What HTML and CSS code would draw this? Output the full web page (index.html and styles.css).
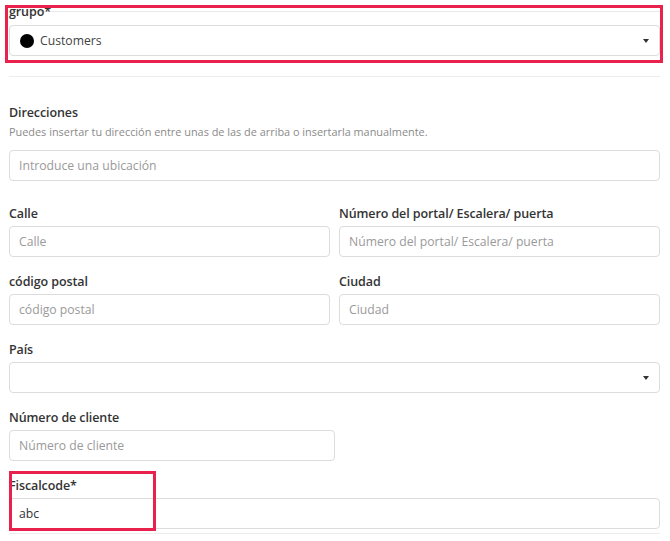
FILE: index.html
```html
<!DOCTYPE html>
<html lang="es">
<head>
<meta charset="utf-8">
<title>Cliente</title>
<link rel="stylesheet" href="styles.css">
</head>
<body>
<form class="form">
  <div class="group group-top">
    <label class="label">grupo*</label>
    <div class="select">
      <span class="dot"></span>
      <span class="select-value">Customers</span>
      <span class="caret"></span>
    </div>
    <span class="mark mark-top"></span>
  </div>

  <hr class="divider">

  <div class="group group-address">
    <label class="label">Direcciones</label>
    <p class="help">Puedes insertar tu dirección entre unas de las de arriba o insertarla manualmente.</p>
    <input class="input" type="text" placeholder="Introduce una ubicación">
  </div>

  <div class="row">
    <div class="group">
      <label class="label">Calle</label>
      <input class="input" type="text" placeholder="Calle">
    </div>
    <div class="group">
      <label class="label">Número del portal/ Escalera/ puerta</label>
      <input class="input" type="text" placeholder="Número del portal/ Escalera/ puerta">
    </div>
  </div>

  <div class="row">
    <div class="group">
      <label class="label">código postal</label>
      <input class="input" type="text" placeholder="código postal">
    </div>
    <div class="group">
      <label class="label">Ciudad</label>
      <input class="input" type="text" placeholder="Ciudad">
    </div>
  </div>

  <div class="group">
    <label class="label">País</label>
    <div class="select">
      <span class="select-value"></span>
      <span class="caret"></span>
    </div>
  </div>

  <div class="group group-half">
    <label class="label">Número de cliente</label>
    <input class="input" type="text" placeholder="Número de cliente">
  </div>

  <div class="group group-fiscal">
    <label class="label">Fiscalcode*</label>
    <input class="input input-filled" type="text" value="abc">
    <span class="mark mark-fiscal"></span>
  </div>

  <div class="next-line"></div>
</form>
</body>
</html>
```

FILE: styles.css
```css
* {
  box-sizing: border-box;
}

html,
body {
  margin: 0;
  background: #ffffff;
}

body {
  font-family: "Open Sans", "Liberation Sans", sans-serif;
  color: #333333;
  overflow: hidden;
}

.form {
  padding: 3px 10px 0 9px;
  display: flex;
  flex-direction: column;
}

.group {
  position: relative;
  display: flex;
  flex-direction: column;
  gap: 3px;
  margin-bottom: 16px;
}

.label {
  font-size: 12.5px;
  font-weight: 600;
  line-height: 18px;
  color: #333333;
  letter-spacing: -0.1px;
}

.group-top {
  margin-bottom: 0;
  gap: 4px;
  background: linear-gradient(#e9e9e9, #e9e9e9) no-repeat 0 8px / 100% 1px;
}

.input {
  height: 31px;
  width: 100%;
  border: 1px solid #dcdcdc;
  border-radius: 4px;
  padding: 0 9px;
  font-family: inherit;
  font-size: 12.2px;
  color: #333333;
  background: #ffffff;
  outline: none;
}

.input::placeholder {
  color: #9a9a9a;
}

.input-filled {
  color: #333333;
}

.select {
  height: 31px;
  border: 1px solid #dcdcdc;
  border-radius: 4px;
  display: flex;
  align-items: center;
  padding: 0 10px 0 9px;
  font-size: 12.2px;
  background: #ffffff;
}

.dot {
  width: 14px;
  height: 14px;
  border-radius: 50%;
  background: #000000;
  margin-right: 6px;
  margin-left: 1px;
}

.select-value {
  flex: 1;
  color: #444444;
}

.caret {
  width: 0;
  height: 0;
  border-left: 3.5px solid transparent;
  border-right: 3.5px solid transparent;
  border-top: 4px solid #333333;
}

.divider {
  border: 0;
  border-top: 1px solid #ececec;
  margin: 20px 0 27px;
}

.group-address {
  gap: 0;
  margin-bottom: 24px;
}

.help {
  margin: 2px 0 10px;
  font-size: 10.9px;
  line-height: 16px;
  color: #8a8a8a;
}

.row {
  display: grid;
  grid-template-columns: 1fr 1fr;
  column-gap: 9px;
}

.group-half {
  width: 326px;
}

.next-line {
  border-top: 1px solid #ececec;
  margin-top: -12px;
}

/* highlight frames drawn over the fields */
.mark {
  position: absolute;
  border: 3px solid #e8224c;
  pointer-events: none;
}

.mark-top {
  left: -4px;
  top: 2px;
  right: -3px;
  bottom: -7px;
}

.mark-fiscal {
  left: 0;
  top: -6px;
  width: 147px;
  bottom: -2px;
}
```
